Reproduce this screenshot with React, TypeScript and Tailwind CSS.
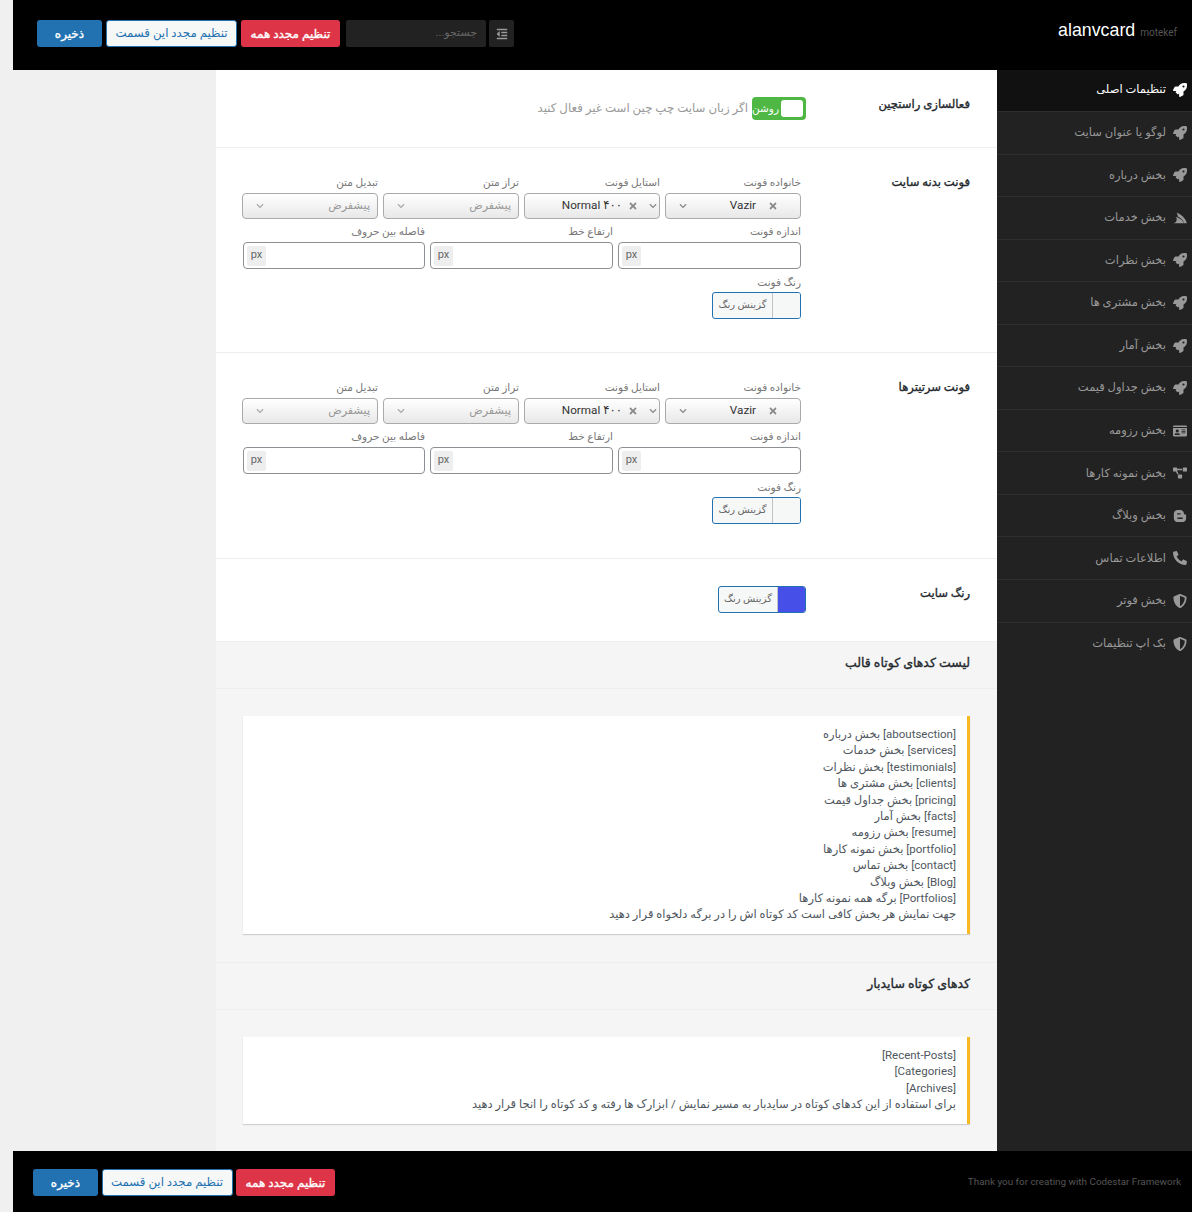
import { FaRocket, FaIdCard, FaProjectDiagram, FaBloggerB, FaPhoneAlt, FaShieldAlt, FaOutdent, FaServicestack, FaChevronDown, FaTimes } from 'react-icons/fa';
import type { IconType } from 'react-icons';

const menu: { label: string; icon: IconType; active?: boolean }[] = [
  { label: 'تنظیمات اصلی', icon: FaRocket, active: true },
  { label: 'لوگو یا عنوان سایت', icon: FaRocket },
  { label: 'بخش درباره', icon: FaRocket },
  { label: 'بخش خدمات', icon: FaServicestack },
  { label: 'بخش نظرات', icon: FaRocket },
  { label: 'بخش مشتری ها', icon: FaRocket },
  { label: 'بخش آمار', icon: FaRocket },
  { label: 'بخش جداول قیمت', icon: FaRocket },
  { label: 'بخش رزومه', icon: FaIdCard },
  { label: 'بخش نمونه کارها', icon: FaProjectDiagram },
  { label: 'بخش وبلاگ', icon: FaBloggerB },
  { label: 'اطلاعات تماس', icon: FaPhoneAlt },
  { label: 'بخش فوتر', icon: FaShieldAlt },
  { label: 'بک اپ تنظیمات', icon: FaShieldAlt },
];

const themeCodes = [
  '[aboutsection] بخش درباره',
  '[services] بخش خدمات',
  '[testimonials] بخش نظرات',
  '[clients] بخش مشتری ها',
  '[pricing] بخش جداول قیمت',
  '[facts] بخش آمار',
  '[resume] بخش رزومه',
  '[portfolio] بخش نمونه کارها',
  '[contact] بخش تماس',
  '[Blog] بخش وبلاگ',
  '[Portfolios] برگه همه نمونه کارها',
  'جهت نمایش هر بخش کافی است کد کوتاه اش را در برگه دلخواه قرار دهید',
];

const sidebarCodes = [
  '[Recent-Posts]',
  '[Categories]',
  '[Archives]',
  'برای استفاده از این کدهای کوتاه در سایدبار به مسیر نمایش / ابزارک ها رفته و کد کوتاه را انجا قرار دهید',
];

const titleClass = 'text-[11.6px] leading-[17px] text-[#23282d] [-webkit-text-stroke:0.35px_#23282d]';
const labelClass = 'text-[10.5px] leading-[16px] text-[#777]';
const selectClass = 'flex h-[26px] w-[136px] items-center rounded-[4px] border border-[#aaaaaa] bg-gradient-to-b from-white to-[#e8e8e8] text-[11.7px] text-[#333]';

function Buttons({ className }: { className: string }) {
  return (
    <div className={`flex items-center ${className}`}>
      <button className="h-[27px] w-[99px] rounded-[3px] bg-[#dd3547] text-[12px] text-white [-webkit-text-stroke:0.35px_white]">تنظیم مجدد همه</button>
      <button className="h-[27px] w-[131px] rounded-[3px] border border-[#2271b1] bg-[#f6f7f7] text-[11.8px] text-[#2271b1]">تنظیم مجدد این قسمت</button>
      <button className="h-[27px] w-[65px] rounded-[3px] bg-[#2271b1] text-[12px] text-white [-webkit-text-stroke:0.35px_white]">ذخیره</button>
    </div>
  );
}

function FamilySelect() {
  return (
    <div className={`${selectClass} pr-[22px] pl-[13px]`}>
      <FaTimes className="text-[10px] text-[#888]" />
      <span className="mr-[12px] font-['Roboto']">Vazir</span>
      <FaChevronDown className="mr-auto text-[8px] text-[#888]" />
    </div>
  );
}

function StyleSelect() {
  return (
    <div className={`${selectClass} pr-[2px]`}>
      <FaChevronDown className="text-[8px] text-[#888]" />
      <FaTimes className="mr-[11px] text-[10px] text-[#888]" />
      <span className="mr-[6px] whitespace-nowrap" dir="ltr">Normal ۴۰۰</span>
    </div>
  );
}

function DefaultSelect() {
  return (
    <div className={`${selectClass} pr-[7px] pl-[13px]`}>
      <span className="text-[11.2px] text-[#999]">پیشفرض</span>
      <FaChevronDown className="mr-auto text-[8px] text-[#aaa]" />
    </div>
  );
}

function PxField({ label, className }: { label: string; className: string }) {
  return (
    <div className={className}>
      <div className={`mb-[2px] ${labelClass}`}>{label}</div>
      <div className="flex h-[27px] items-center justify-end rounded-[4px] border border-[#8c8f94] bg-white pl-[3px]">
        <span className="flex h-[20px] w-[19px] items-center justify-center rounded-[2px] bg-[#eeeeee] font-['Roboto'] text-[11px] text-[#666]">px</span>
      </div>
    </div>
  );
}

function ColorButton({ color, className }: { color: string; className: string }) {
  return (
    <div className={`flex h-[27px] items-stretch overflow-hidden rounded-[3px] border border-[#2271b1] bg-[#f6f7f7] ${className}`}>
      <span className={`w-[28px] border-l border-[#c3c4c7] ${color}`} />
      <span className="flex-1 text-center text-[10px] leading-[24px] text-[#666]">گزینش رنگ</span>
    </div>
  );
}

function FontFields() {
  return (
    <div className="flex w-[559px] flex-col pt-[1px]">
      <div className="flex gap-[5px]">
        <div className="w-[136px]">
          <div className={`mb-[2px] ${labelClass}`}>خانواده فونت</div>
          <FamilySelect />
        </div>
        <div className="w-[136px]">
          <div className={`mb-[2px] ${labelClass}`}>استایل فونت</div>
          <StyleSelect />
        </div>
        <div className="w-[136px]">
          <div className={`mb-[2px] ${labelClass}`}>تراز متن</div>
          <DefaultSelect />
        </div>
        <div className="w-[136px]">
          <div className={`mb-[2px] ${labelClass}`}>تبدیل متن</div>
          <DefaultSelect />
        </div>
      </div>
      <div className="mt-[5px] flex gap-[5px] pl-[1px]">
        <PxField label="اندازه فونت" className="w-[183px]" />
        <PxField label="ارتفاع خط" className="w-[183px]" />
        <PxField label="فاصله بین حروف" className="w-[182px]" />
      </div>
      <div className="mt-[6px]">
        <div className={`mb-[1px] ${labelClass}`}>رنگ فونت</div>
        <ColorButton color="bg-[#f6f7f7]" className="w-[89px]" />
      </div>
    </div>
  );
}

function NoticeBlock({ lines, className }: { lines: string[]; className: string }) {
  return (
    <div className={`bg-[#f5f5f5] px-[27px] pt-[27px] ${className}`}>
      <div className="border-r-[3px] border-[#f9b924] bg-white pt-[10px] pb-[11px] pr-[11px] pl-[12px] text-[11.5px] leading-[16.4px] text-[#50575e] shadow-[0_1px_1px_rgba(0,0,0,0.15)]">
        {lines.map((line) => (
          <div key={line}>{line}</div>
        ))}
      </div>
    </div>
  );
}

function Heading({ children }: { children: string }) {
  return (
    <div className="flex h-[48px] items-center border-y border-[#eeeeee] bg-[#f5f5f5] px-[27px] pb-[3px] text-[12.5px] text-[#23282d] [-webkit-text-stroke:0.35px_#23282d]">
      {children}
    </div>
  );
}

export default function App() {
  return (
    <div dir="rtl" className="flex h-[1212px] w-[1192px] flex-col overflow-hidden bg-[#f0f0f0] font-['Roboto','DejaVu_Sans',sans-serif]">
      <header className="ml-[13px] flex h-[70px] items-start justify-between bg-black pt-[20px] pl-[24px] pr-[15px]">
        <div className="flex items-baseline gap-[5px]" dir="ltr">
          <span className="font-['Liberation_Sans'] text-[17.8px] leading-[20px] text-white">alanvcard</span>
          <span className="text-[10px] text-[#555]">motekef</span>
        </div>
        <div className="flex items-center gap-[3px]">
          <button className="flex h-[27px] w-[25px] items-center justify-center rounded-[2px] bg-[#222] text-[12px] text-[#999]">
            <FaOutdent />
          </button>
          <div className="ml-[3px] flex h-[27px] w-[140px] items-center rounded-[2px] bg-[#222] pr-[9px] text-[11px] text-[#666]">جستجو...</div>
          <Buttons className="gap-[4px]" />
        </div>
      </header>
      <div className="flex min-h-0 flex-1">
        <aside className="w-[195px] bg-[#222222]">
          {menu.map((item, i) => {
            const Icon = item.icon;
            return (
              <div
                key={item.label}
                className={`flex items-center gap-[6px] pr-[5px] text-[11.5px] ${i === 0 ? 'h-[42px] pb-[2px]' : 'h-[42.55px]'} ${i < menu.length - 1 ? 'border-b border-[#2e2e2e]' : ''} ${item.active ? 'bg-[#111111] text-white' : 'text-[#999]'}`}
              >
                <span className="flex w-[15px] justify-center text-[14px]"><Icon /></span>
                <span>{item.label}</span>
              </div>
            );
          })}
        </aside>
        <main className="w-[781px] bg-white">
          <section className="flex h-[78px] border-b border-[#eeeeee] px-[27px] pt-[26px]">
            <h3 className={`w-[164px] shrink-0 ${titleClass}`}>فعالسازی راستچین</h3>
            <div className="flex items-center self-start pt-[1px]">
              <div className="flex h-[23px] w-[54px] shrink-0 items-center rounded-[4px] bg-[#4fb845] pr-[3px] text-[10.5px] text-white">
                <span className="h-[17px] w-[22px] shrink-0 rounded-[3px] bg-white" />
                <span className="mr-[2px] whitespace-nowrap">روشن</span>
              </div>
              <span className="mr-[4px] text-[11.8px] text-[#999]">اگر زبان سایت چپ چین است غیر فعال کنید</span>
            </div>
          </section>
          <section className="flex h-[205px] border-b border-[#eeeeee] px-[27px] pt-[26px]">
            <h3 className={`w-[169px] shrink-0 ${titleClass}`}>فونت بدنه سایت</h3>
            <FontFields />
          </section>
          <section className="flex h-[206px] border-b border-[#eeeeee] px-[27px] pt-[26px]">
            <h3 className={`w-[169px] shrink-0 ${titleClass}`}>فونت سرتیترها</h3>
            <FontFields />
          </section>
          <section className="flex h-[82px] px-[27px] pt-[26px]">
            <h3 className={`w-[164px] shrink-0 ${titleClass}`}>رنگ سایت</h3>
            <div className="pt-[1px]">
              <ColorButton color="bg-[#4650e8]" className="w-[88px]" />
            </div>
          </section>
          <Heading>لیست کدهای کوتاه قالب</Heading>
          <NoticeBlock lines={themeCodes} className="h-[273px]" />
          <Heading>کدهای کوتاه سایدبار</Heading>
          <NoticeBlock lines={sidebarCodes} className="h-[141px]" />
        </main>
        <div className="flex-1" />
      </div>
      <footer className="ml-[13px] flex h-[61px] items-start justify-between bg-black pt-[18px] pl-[20px] pr-[11px]">
        <span className="pt-[6px] text-[9.9px] text-[#555]" dir="ltr">Thank you for creating with Codestar Framework</span>
        <Buttons className="gap-[3.5px]" />
      </footer>
    </div>
  );
}
